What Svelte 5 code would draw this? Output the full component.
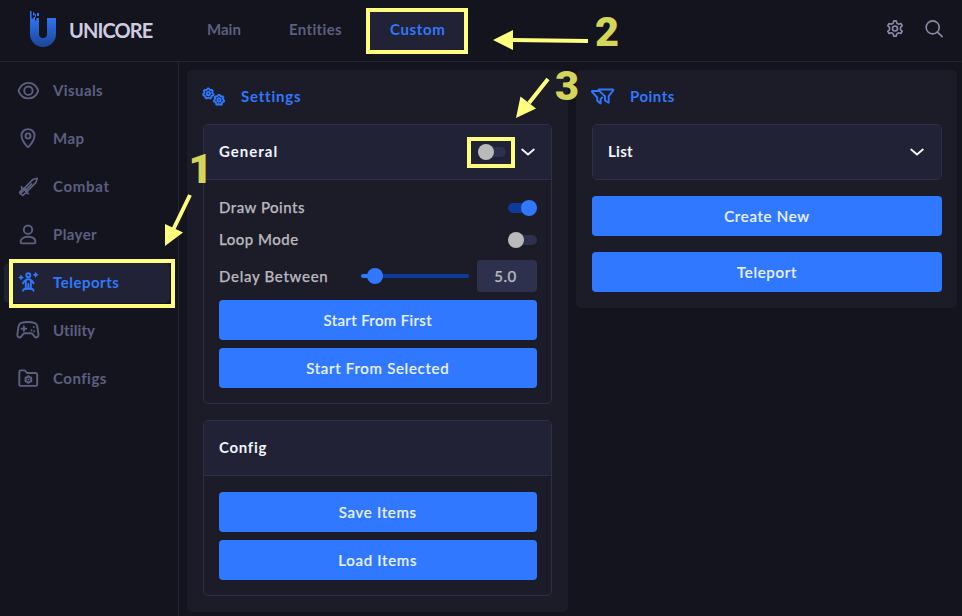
<script>
  const nav = [
    { id: 'visuals', label: 'Visuals' },
    { id: 'map', label: 'Map' },
    { id: 'combat', label: 'Combat' },
    { id: 'player', label: 'Player' },
    { id: 'teleports', label: 'Teleports' },
    { id: 'utility', label: 'Utility' },
    { id: 'configs', label: 'Configs' }
  ];
  const delay = 5;
  let drawPoints = $state(true);
  let loopMode = $state(false);
  let general = $state(false);

  function gear(cx, cy, r, teeth) {
    let d = '';
    const steps = teeth * 4;
    for (let i = 0; i < steps; i++) {
      const a = ((i + 0.5) / steps) * Math.PI * 2 - Math.PI / 2 - Math.PI / teeth / 2;
      const q = i % 4 < 2 ? r : r * 0.8;
      d += (i ? 'L' : 'M') + (cx + q * Math.cos(a)).toFixed(2) + ' ' + (cy + q * Math.sin(a)).toFixed(2);
    }
    return d + 'Z';
  }
</script>

{#snippet chevron()}
  <svg class="chevron" width="16" height="10" viewBox="0 0 16 10"><path d="M2.200 2.500l5.800 5 5.800-5" /></svg>
{/snippet}

<div class="app">
  <header>
    <div class="brand">
      <svg width="28" height="38" viewBox="0 0 28 38">
        <defs>
          <linearGradient id="brand-fill" x1="0" y1="0" x2="0" y2="1">
            <stop offset="0.1" stop-color="#3078fb" />
            <stop offset="1" stop-color="#1d4595" />
          </linearGradient>
        </defs>
        <path fill="url(#brand-fill)" d="M1 1h1.500v7.500h2V7h1.500v3.500h1.500V8h2.500v16a4 4 0 0 0 8 0V8h9v16a13 13 0 0 1-26 0ZM4 2.500h1.500v3H4ZM6 4h1v3H6ZM8 3h2v3H8Z" />
      </svg>
      <span class="brand-name">UNICORE</span>
    </div>
    <nav class="tabs">
      <span class="tab main">Main</span>
      <span class="tab entities">Entities</span>
      <span class="tab custom">Custom</span>
    </nav>
    <div class="tools">
      <svg width="20" height="20" viewBox="0 0 20 20">
        <path d="M8.200 4.100l.5-2.200h2.600l.5 2.200 1.900 1.100 2.200-.7 1.300 2.200-1.700 1.600v2.400l1.700 1.600-1.300 2.200-2.200-.7-1.900 1.100-.5 2.200H8.700l-.5-2.200-1.900-1.100-2.200.7-1.300-2.200 1.700-1.600V8.300L2.800 6.700l1.300-2.200 2.200.7Z" />
        <circle cx="10" cy="9.500" r="2.500" />
      </svg>
      <svg width="20" height="20" viewBox="0 0 20 20"><circle cx="8.700" cy="8.400" r="6.500" /><path d="M13.400 13.100l4.800 4.600" /></svg>
    </div>
  </header>

  <div class="body">
    <aside>
      {#each nav as item}
        <div class="item {item.id}">
          <svg width="24" height="24" viewBox="0 0 24 24">
            {#if item.id === 'visuals'}
              <path d="M2.700 11.100C4.700 6.200 7.800 3.900 12.400 3.900s7.700 2.300 9.700 7.200c.2.600.2.800 0 1.200-2 4.600-5.100 7.100-9.700 7.100s-7.700-2.500-9.700-7.100c-.2-.4-.2-.6 0-1.200Z" /><circle cx="12.400" cy="11.700" r="4.200" />
            {:else if item.id === 'map'}
              <path d="M12 2.100c-3.900 0-6.500 2.900-6.500 6.500 0 4.200 2.600 7.700 5.700 11q.8.800 1.600 0c3.100-3.300 5.700-6.800 5.700-11 0-3.600-2.600-6.500-6.500-6.500Z" /><circle cx="12" cy="8.900" r="2.500" />
            {:else if item.id === 'combat'}
              <path d="M8.400 13.100l8.600-8.700 4.200-1.200-1.200 4.200-8.500 8.700ZM10.200 14.600l5.300-5.500M5.400 11.900l6.900 6.900M8 14.900l-3.700 4M3.500 17.500l3.200 3M5.900 12.700c.2 1.900-.6 3.500-2.400 4.400M11.400 17.900c-1.900-.2-3.300.6-4.300 2.400" />
            {:else if item.id === 'player'}
              <circle cx="12" cy="6.700" r="4.200" /><path d="M4.600 19c0-3.200 2.700-5.200 7.400-5.200s7.400 2 7.400 5.200c0 1-.5 1.400-1.400 1.400H6c-.9 0-1.400-.4-1.400-1.400Z" />
            {:else if item.id === 'teleports'}
              <circle cx="12.300" cy="4.200" r="2" /><path d="M7 12.300c1.200-2.300 2.500-4 5.300-4s4.200 1.700 5.300 4M9.800 9.500v8.500M14.800 9.500v8.500M12.300 13v5M7 19.700q.8-1.900 2.500-1.900h5.600q1.700 0 2.500 1.900" />
              <path class="solid" d="M5 3.500l1.100 1.900 1.900 1.100-1.900 1.100L5 9.500 3.900 7.600 2 6.500l1.900-1.100ZM19.700.8l1.100 1.900 1.900 1.100-1.900 1.100-1.100 1.900-1.100-1.900-1.900-1.100 1.900-1.100Z" />
            {:else if item.id === 'utility'}
              <path d="M4.700 4.200C8.800 2.800 15 2.800 19.100 4.200c1.500.6 1.800 1.700 2.200 3.300l1.100 7.600c.5 3-2 4.400-3.900 2.400l-2-2.600q-.5-.7-1.500-.7H8.800q-1 0-1.500.7l-2 2.600c-1.900 2-4.400.6-3.900-2.400l1.100-7.600c.4-1.600.7-2.700 2.200-3.300ZM7.900 7.300v4.800M5.500 9.700h4.800" />
              <path class="dots" d="M17.800 8v.02M15.500 11.300v.02M18.200 12.200v.02" />
            {:else}
              <path d="M3.300 5q0-1.600 1.600-1.600h3.300q.8 0 1.300.7l1.500 1.900h8.200q2 0 2 2v9.400q0 1.500-1.500 1.500H4.900q-1.600 0-1.600-1.500Z" /><path d={gear(12.400, 12.500, 3.300, 6)} /><circle class="hub" cx="12.400" cy="12.500" r=".9" />
            {/if}
          </svg>
          <span>{item.label}</span>
        </div>
      {/each}
    </aside>

    <main>
      <section class="panel">
        <h2 class="settings-title">
          <svg width="26" height="22" viewBox="0 0 26 22">
            <path d={gear(7.300, 7.600, 5.200, 7)} /><circle cx="7.300" cy="7.600" r="1.700" />
            <path d={gear(18, 14, 5.200, 7)} /><circle cx="18" cy="14" r="1.700" />
          </svg>
          <span>Settings</span>
        </h2>
        <div class="card">
          <div class="card-head">
            <span class="general-label">General</span>
            <button class="switch" class:on={general} aria-label="General" onclick={() => (general = !general)}><i></i></button>
            {@render chevron()}
          </div>
          <div class="card-body">
            <div class="row"><span class="draw">Draw Points</span><button class="switch" class:on={drawPoints} aria-label="Draw Points" onclick={() => (drawPoints = !drawPoints)}><i></i></button></div>
            <div class="row"><span class="loop">Loop Mode</span><button class="switch" class:on={loopMode} aria-label="Loop Mode" onclick={() => (loopMode = !loopMode)}><i></i></button></div>
            <div class="row delay">
              <span class="between">Delay Between</span>
              <div class="slider"><i></i></div>
              <div class="value">{delay.toFixed(1)}</div>
            </div>
            <div class="stack">
              <button class="action first">Start From First</button>
              <button class="action selected">Start From Selected</button>
            </div>
          </div>
        </div>
        <div class="card">
          <div class="card-head"><span class="config-label">Config</span></div>
          <div class="card-body buttons">
            <div class="stack">
              <button class="action save">Save Items</button>
              <button class="action load">Load Items</button>
            </div>
          </div>
        </div>
      </section>

      <section class="panel points">
        <h2 class="points-title">
          <svg width="26" height="22" viewBox="0 0 26 22">
            <path d="M9 3.500h13.700c.6 0 .8.600.5 1L18.700 10.200v6.600l-3.700-2.300v-4.300L8.700 4.400c-.3-.5-.2-.9.300-.9ZM8.800 5H2.500c-.6 0-.8.400-.4.900L7.200 11.500v3.300l3.400 2.700v-4.300l1.600-1.800" />
          </svg>
          <span>Points</span>
        </h2>
        <div class="card"><div class="card-head"><span class="list-label">List</span>{@render chevron()}</div></div>
        <button class="action create">Create New</button>
        <button class="action teleport">Teleport</button>
      </section>
    </main>
  </div>

  <div class="mark mark-teleports"></div>
  <div class="mark mark-custom"></div>
  <div class="mark mark-switch"></div>
  <svg class="notes" width="962" height="616" viewBox="0 0 962 616">
    <path class="shaft" d="M190 195L173 230M588 41L512 40M548 79L529 103" />
    <path class="tip" d="M165 246v-22l18 8.500ZM493 40l20-10v20ZM516 118l4.500-21.500L536 108.500Z" />
    <text x="188.500" y="183">1</text>
    <text x="595" y="45.500">2</text>
    <text x="555" y="100">3</text>
  </svg>
</div>

<style>
  :global(body) { background: #14141f; }
  .app { position: relative; width: 962px; height: 616px; overflow: hidden; display: flex; flex-direction: column; box-sizing: border-box; background: #14141f; color: #b9b9bd; font: 500 15px/20px Lato, "Open Sans", sans-serif; }
  .app * { box-sizing: border-box; }
  svg { flex: none; fill: none; stroke: currentColor; stroke-width: 1.900; stroke-linecap: round; stroke-linejoin: round; }
  header { height: 62px; flex: none; display: flex; align-items: flex-start; border-bottom: 1px solid #232335; }
  .brand { width: 186px; display: flex; gap: 12px; padding: 10px 0 0 29px; color: #cfcbe0; }
  .brand svg { stroke: none; }
  .brand-name { font: 700 20px/40px Lato, sans-serif; letter-spacing: -.9px; }
  .tabs { flex: 1; display: flex; font-weight: 700; color: #5c5f80; }
  .tab { height: 40px; margin-top: 10px; line-height: 39px; padding-left: 21px; border-radius: 4px; white-space: nowrap; }
  .main { width: 82px; }
  .entities { width: 101px; letter-spacing: .35px; }
  .custom { width: 95px; background: #222236; color: #3078fb; letter-spacing: .65px; }
  .tools { display: flex; gap: 19px; padding: 19px 18px 0 0; color: #898ba8; }
  .tools svg { stroke-width: 1.600; }
  .body { flex: 1; min-height: 0; display: flex; }
  aside { width: 179px; flex: none; border-right: 1px solid #232335; padding: 9px 8px 0 4px; display: flex; flex-direction: column; gap: 8px; }
  .item { height: 40px; flex: none; display: flex; align-items: center; gap: 13px; padding-left: 12px; border-radius: 5px; color: #5c5f80; font-weight: 700; letter-spacing: .4px; }
  .item span { padding-bottom: 2px; }
  .item.teleports { background: #222236; color: #3078fb; letter-spacing: .5px; }
  .item.combat { letter-spacing: .7px; }
  .item.combat svg { stroke-width: 1.600; }
  .item.utility { letter-spacing: .1px; }
  .item.configs { letter-spacing: .5px; }
  main { display: flex; align-items: flex-start; gap: 8px; padding: 8px 0 0 8px; }
  .panel { width: 381px; height: 542px; padding: 16px; border-radius: 5px; background: #1c1b28; display: flex; flex-direction: column; gap: 16px; }
  .panel.points { height: 238px; padding: 16px 15px 16px 16px; }
  h2 { margin: 0; height: 22px; display: flex; align-items: center; gap: 14px; font-size: 15px; font-weight: 700; color: #3078fb; letter-spacing: .8px; }
  .points-title { letter-spacing: .5px; }
  h2 span { padding-bottom: 2px; }
  h2 svg { margin-left: -2px; }
  .card { border: 1px solid #2b2f4a; border-radius: 5px; overflow: hidden; flex: none; }
  .card-head { height: 55px; padding: 0 15px; display: flex; align-items: center; color: #f0f5fc; font-weight: 700; background: #222236; border-bottom: 1px solid #2b2f4a; letter-spacing: .3px; }
  .card-head span { flex: 1; padding-bottom: 2px; }
  .general-label { letter-spacing: 1px; }
  .config-label { letter-spacing: .7px; }
  .points .card-head { height: 54px; border: 0; padding-right: 16px; }
  .card-body { height: 223px; padding: 12px 14.500px 15px 15px; }
  .card-body.buttons { height: 119px; padding-top: 16px; }
  .chevron { stroke: #f0f5fc; }
  .row { height: 32px; display: flex; align-items: center; justify-content: space-between; letter-spacing: .5px; }
  .row > span { padding-bottom: 2px; -webkit-text-stroke: .25px currentColor; }
  .row.delay { height: 40px; margin-bottom: 4px; justify-content: flex-start; }
  .row.delay .between { width: 142px; letter-spacing: .7px; padding: 0; }
  .switch { position: relative; width: 28.500px; height: 16px; padding: 3px 0; border: 0; background: none; }
  .switch::before { content: ""; display: block; height: 10px; border-radius: 5px; background: #2d314e; }
  .switch i { position: absolute; top: 0; left: 0; width: 16px; height: 16px; border-radius: 50%; background: #bababb; }
  .switch.on::before { background: #0c3b98; }
  .switch.on i { left: 12.500px; background: #3078ff; }
  .card-head .switch { margin-right: 14px; }
  .slider { position: relative; width: 108px; height: 4px; margin-right: 7.500px; border-radius: 2px; background: linear-gradient(90deg, #3078ff 14px, #0c3b98 14px); }
  .slider i { position: absolute; left: 6px; top: -6px; width: 16px; height: 16px; border-radius: 50%; background: #3078ff; }
  .value { width: 60px; height: 32px; padding-right: 2px; line-height: 33px; border-radius: 4px; background: #2d314e; text-align: center; -webkit-text-stroke: .25px currentColor; }
  .stack { display: flex; flex-direction: column; gap: 8px; }
  .action { height: 40px; flex: none; padding: 0; border: 0; border-radius: 4px; background: #3078ff; color: #e8f2ff; font: 500 15px/20px Lato, sans-serif; letter-spacing: .7px; -webkit-text-stroke: .2px currentColor; }
  .action.first { letter-spacing: .35px; }
  .mark { position: absolute; border: 4px solid #ffff7f; }
  .mark-teleports { left: 9px; top: 259px; width: 166px; height: 49px; }
  .mark-custom { left: 366px; top: 8px; width: 102px; height: 46px; }
  .mark-switch { left: 467px; top: 137px; width: 48px; height: 31px; }
  .notes { position: absolute; inset: 0; pointer-events: none; }
  .shaft { stroke: #ffff7f; stroke-width: 4; stroke-linecap: butt; }
  .tip { fill: #ffff7f; stroke: none; }
  .notes text { fill: #d5d55b; stroke: none; font: 900 41.500px Roboto, sans-serif; }
  .solid, .hub { fill: currentColor; stroke: none; }
  .dots { stroke-width: 2; }
</style>
